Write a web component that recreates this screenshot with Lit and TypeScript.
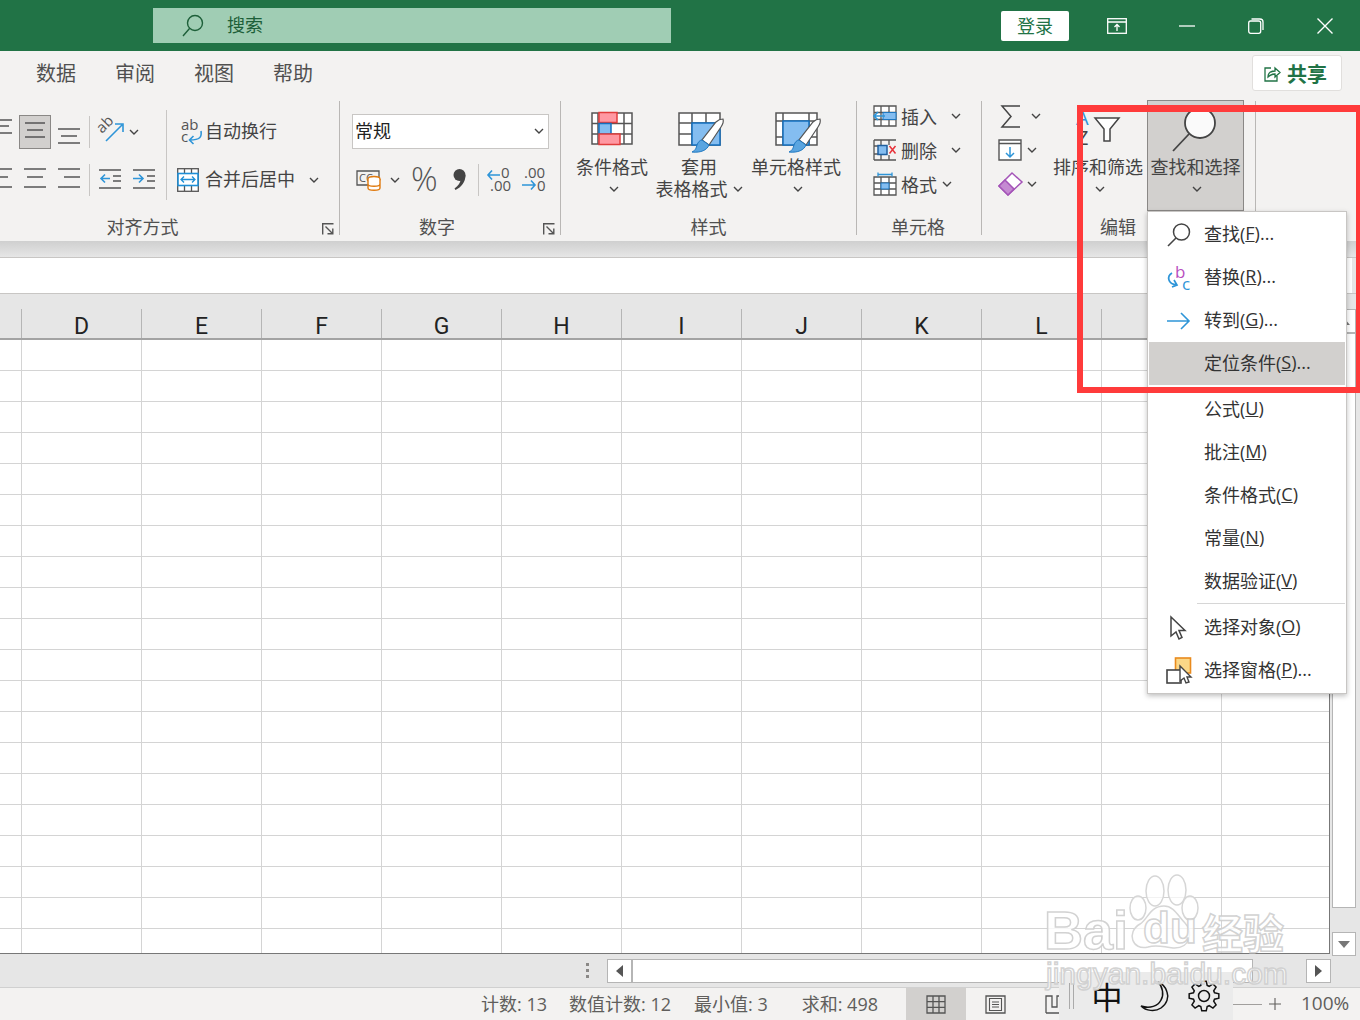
import { LitElement, html, css, svg } from "lit";
import { customElement } from "lit/decorators.js";

const chev = html`<svg class="chev" width="10" height="7" viewBox="0 0 10 7"><path d="M1 1l4 4 4-4" fill="none" stroke="#444" stroke-width="1.4"/></svg>`;
const lines = (w: number, ys: number[], xs: [number, number][]) => html`<svg width="${w}" height="34" viewBox="0 0 ${w} 34">${ys.map((y, i) => svg`<path d="M${xs[i][0]} ${y}H${xs[i][1]}" stroke="#555" stroke-width="1.5"/>`)}</svg>`;
const launcher = html`<svg class="launch" width="12" height="12" viewBox="0 0 12 12"><path d="M.7 11.5V.7h10.8" fill="none" stroke="#555" stroke-width="1.4"/><path d="M3.5 3.5l7 7M5.5 10.8h5.3V5.5" fill="none" stroke="#555" stroke-width="1.4"/></svg>`;
const brush = (x: number, y: number) => svg`<g transform="translate(${x} ${y})">
  <path d="M34 0c1 3 0 5-2 8L20 26l-7-5L27 3c2-2 5-3 7-3z" fill="#fff" stroke="#555" stroke-width="1.2"/>
  <path d="M13 21l7 5c-2 5-8 8-17 7 4-2 4-4 5-7 1-3 3-5 5-5z" fill="#5aa5e0" stroke="#1f78c1" stroke-width="1"/></g>`;

const items1 = [
  { t: "查找", k: "F", d: "...", i: "find" },
  { t: "替换", k: "R", d: "...", i: "replace" },
  { t: "转到", k: "G", d: "...", i: "goto" },
  { t: "定位条件", k: "S", d: "...", i: "", on: true },
];
const items2 = [
  { t: "公式", k: "U", d: "" }, { t: "批注", k: "M", d: "" }, { t: "条件格式", k: "C", d: "" },
  { t: "常量", k: "N", d: "" }, { t: "数据验证", k: "V", d: "" },
];

const menuIcons: Record<string, any> = {
  find: html`<svg width="26" height="26" viewBox="0 0 26 26"><circle cx="15.500" cy="10" r="8" fill="none" stroke="#444" stroke-width="1.500"/><path d="M10 16L2 24" stroke="#444" stroke-width="1.600"/></svg>`,
  replace: html`<svg width="26" height="28" viewBox="0 0 26 28"><text x="9" y="14" font-size="17" fill="#b84fc0" font-family="Open Sans">b</text><text x="16" y="26" font-size="17" fill="#2e95d8" font-family="Open Sans">c</text><path d="M6 9c-5 3-5 11 5 12M8 16l3 5-5 2" fill="none" stroke="#2e95d8" stroke-width="1.700"/></svg>`,
  goto: html`<svg width="26" height="22" viewBox="0 0 26 22"><path d="M1 11h22M15 3l8 8-8 8" fill="none" stroke="#2e95d8" stroke-width="1.600"/></svg>`,
  obj: html`<svg width="26" height="26" viewBox="0 0 26 26"><path d="M5 2v19l5-4 3 7 3-1.500-3-7h6z" fill="#fff" stroke="#444" stroke-width="1.500"/></svg>`,
  pane: html`<svg width="26" height="28" viewBox="0 0 26 28"><rect x="9.500" y="1" width="15" height="15" fill="#fbd787" stroke="#e98a1d" stroke-width="1.600"/><rect x="1" y="13" width="14" height="13" fill="#fff" stroke="#444" stroke-width="1.600"/><path d="M14 9v15l4-3 2 5 3-1-2-5h4z" fill="#fff" stroke="#444" stroke-width="1.400"/></svg>`,
};

function gearPath(cx: number, cy: number, ro: number, ri: number, n: number) {
  const p: string[] = [];
  for (let i = 0; i < n; i++) {
    const a = (i / n) * Math.PI * 2;
    const w = Math.PI / n;
    const pts: [number, number][] = [[ri, a - w * 0.75], [ro, a - w * 0.38], [ro, a + w * 0.38], [ri, a + w * 0.75]];
    for (const [r, t] of pts) p.push(`${(cx + r * Math.cos(t)).toFixed(2)} ${(cy + r * Math.sin(t)).toFixed(2)}`);
  }
  return "M" + p.join("L") + "Z";
}

@customElement("app-root")
export class AppRoot extends LitElement {
  static styles = css`
    :host { display: block; width: 1360px; height: 1020px; position: relative; overflow: hidden; background: #f3f2f1;
      font-family: "Open Sans", "Noto Sans CJK SC", sans-serif; color: #444; font-size: 18px; }
    svg { display: block; flex: none; overflow: visible; }
    .title { height: 51px; background: #217346; display: flex; align-items: center; color: #fff; }
    .search { margin-left: 153px; width: 518px; height: 35px; background: #a0cdb4; display: flex; align-items: center; color: #1d5f39; }
    .search svg { margin-left: 28px; }
    .search span { margin-left: 22px; line-height: 35px; }
    .login { margin-left: 330px; width: 68px; height: 30px; box-sizing: border-box; padding-bottom: 2px; background: #fff; border-radius: 2px; color: #217346; display: flex; align-items: center; justify-content: center; }
    .win1 { margin-left: 38px; } .win2 { margin-left: 52px; } .win3 { margin-left: 53px; } .win4 { margin-left: 53px; }

    .tabs { height: 46px; box-sizing: border-box; padding: 0 0 4px 36px; display: flex; align-items: center; font-size: 20px; gap: 39px; color: #505050; position: relative; }
    .share { margin-left: auto; margin-right: 18px; width: 90px; height: 36px; box-sizing: border-box; background: #fff; border: 1px solid #e1dfdd; border-radius: 3px; display: flex; align-items: center; padding-left: 11px; gap: 6px; color: #217346; font-weight: 700; font-size: 20px; margin-top: 2px; }

    .ribbon { height: 144px; display: flex; }
    .group { display: flex; flex-direction: column; position: relative; flex: none; padding-top: 4px; box-sizing: border-box; }
    .body { height: 115px; display: flex; flex: none; }
    .glabel { height: 24px; line-height: 24px; margin-top: -1px; text-align: center; color: #505050; white-space: nowrap; }
    .launch { position: absolute; right: 5px; bottom: 6px; }
    .gsep { width: 1px; height: 134px; margin-top: 4px; background: #b9b7b5; flex: none; }
    .sep { width: 1px; height: 32px; background: #c8c6c4; flex: none; }
    .col { display: flex; flex-direction: column; }
    .rows2 { padding-top: 14px; gap: 14px; }
    .row { display: flex; align-items: center; height: 34px; white-space: nowrap; }
    .tx { margin-bottom: 4px; }
    .seltile { width: 30px; height: 32px; border: 1px solid #8a8886; background: #d2d0ce; margin-left: 7px; display: flex; justify-content: center; align-items: center; }
    .vline { width: 1px; height: 90px; margin-top: 9px; background: #c8c6c4; flex: none; }
    .select { width: 197px; height: 35px; box-sizing: border-box; background: #fff; border: 1px solid #c8c6c4; margin-top: 13px; display: flex; align-items: center; padding-left: 2px; color: #222; }
    .select .chev { margin-left: auto; margin-right: 4px; }
    .pct { font-size: 33px; line-height: 34px; width: 26px; color: #555; font-weight: 300; margin: 0 0 3px -2px; padding-right: 2px; }
    .big { display: flex; flex-direction: column; align-items: center; flex: none; height: 115px; box-sizing: border-box; padding-top: 10px; white-space: nowrap; }
    .big .ic { height: 36px; flex: none; }
    .big .t { height: 22px; line-height: 22px; display: flex; align-items: center; gap: 5px; }
    .big .t:first-of-type { margin-top: 9px; }
    .big .t.cv { padding-left: 4px; }
    .cellrow { height: 34px; display: flex; align-items: center; white-space: nowrap; }
    .cells { padding: 0 0 0 16px; }
    .up2 { margin-top: -2px; }
    .shift2 { margin-left: 4px; }
    .find { width: 97px; height: 111px; box-sizing: border-box; border: 1px solid #8a8886; background: #d2d0ce; margin-top: -1px; margin-left: 4px; padding-top: 4px; }
    .find .ic { height: 42px; }

    .band { height: 16px; background: linear-gradient(#cfcfcf, #e6e6e6); }
    .fbar { height: 37px; box-sizing: border-box; background: #e6e6e6; border-top: 1px solid #c8c6c4; border-bottom: 1px solid #c8c6c4; }
    .fbar div { width: 1352px; height: 100%; background: #fff; }
    .main { height: 660px; display: flex; }
    .sheet { width: 1330px; display: flex; flex-direction: column; flex: none; }
    .chead { height: 46px; box-sizing: border-box; background: #e6e6e6; border-bottom: 2px solid #a3a3a3; display: flex; padding-left: 21px; padding-top: 15px; flex: none; }
    .chead div { width: 120px; flex: none; box-sizing: border-box; border-left: 1px solid #b5b5b5; text-align: center; font-family: Roboto, sans-serif; font-size: 23px; line-height: 35px; color: #222; }
    .chead div:last-child { width: 109px; }
    .cells-grid { flex: 1; background-color: #fff; border-right: 1px solid #777; border-bottom: 1px solid #777;
      background-image: linear-gradient(#d4d4d4 1px, transparent 1px), linear-gradient(90deg, #d4d4d4 1px, transparent 1px);
      background-size: 120px 31px; background-position: 21px 30px; }
    .vscroll { width: 30px; background: #e6e6e6; display: flex; flex-direction: column; padding: 15px 0 0 2px; box-sizing: border-box; flex: none; }
    .vbtn { width: 24px; height: 24px; box-sizing: border-box; background: #fff; border: 1px solid #b5b5b5; display: flex; align-items: center; justify-content: center; flex: none; }
    .vthumb { width: 24px; height: 575px; box-sizing: border-box; background: #fff; border: 1px solid #b5b5b5; flex: none; }
    .vscroll .last { margin-top: 24px; }
    .hscroll { height: 34px; box-sizing: border-box; background: #e6e6e6; border-bottom: 1px solid #d0d0d0; display: flex; align-items: center; padding-left: 586px; }
    .dots { display: flex; flex-direction: column; gap: 3px; margin-right: 18px; }
    .dots i { width: 3px; height: 3px; background: #8a8886; display: block; }
    .hbtn { width: 25px; height: 24px; box-sizing: border-box; background: #fff; border: 1px solid #b5b5b5; display: flex; align-items: center; justify-content: center; flex: none; }
    .hthumb { width: 621px; height: 24px; box-sizing: border-box; background: #fff; border: 1px solid #b5b5b5; flex: none; }
    .status { height: 32px; display: flex; align-items: center; white-space: nowrap; color: #605e5c; font-size: 18px; position: relative; }
    .status > span { flex: none; }
    .st { margin-bottom: 2px; }
    .sbtn { width: 60px; height: 32px; display: flex; align-items: center; justify-content: center; flex: none; }
    .sbtn.on { background: #d2d0ce; }

    .menu { position: absolute; left: 1147px; top: 211px; width: 200px; height: 483px; box-sizing: border-box; background: #fff; border: 1px solid #c8c6c4; box-shadow: 0 2px 5px rgba(0,0,0,.25); padding: 1px; z-index: 2; color: #333; }
    .mi { height: 43px; box-sizing: border-box; display: flex; align-items: center; white-space: nowrap; position: relative; padding: 0 0 4px 55px; }
    .mi.on { background: #d2d0ce; }
    .mi svg { position: absolute; left: 17px; top: 50%; transform: translateY(-50%); }
    .mgap { height: 3px; }
    .msep { height: 1px; background: #d6d6d6; margin: 0 0 2px 48px; }
    .red { position: absolute; left: 1077px; top: 105px; width: 283px; height: 288px; box-sizing: border-box; border: solid #ff3b3b; border-width: 7px 4px 6px 6px; z-index: 3; }
    .ime { position: absolute; left: 1059px; top: 972px; width: 174px; height: 48px; background: #ebebeb; display: flex; align-items: center; z-index: 4; color: #111; }
    .ime .zh { font-size: 31px; line-height: 48px; margin-left: 15px; width: 36px; text-align: center; font-family: "Noto Sans CJK SC", sans-serif; }
    .wm { position: absolute; left: 1040px; top: 870px; width: 270px; height: 125px; z-index: 5; pointer-events: none; }
    .wm span { position: absolute; white-space: nowrap; color: rgba(255,255,255,.8); -webkit-text-stroke: 1.5px rgba(205,205,205,.9); font-family: "Liberation Sans", "Noto Sans CJK SC", sans-serif; font-weight: 700; }
    .wm .bai { left: 4px; top: 30px; font-size: 54px; line-height: 60px; }
    .wm .du { left: 103px; top: 33px; font-size: 44px; line-height: 50px; }
    .wm .jy { left: 162px; top: 36px; font-size: 41px; line-height: 50px; font-family: "Noto Sans CJK SC", sans-serif; }
    .wm .url { left: 6px; top: 86px; font-size: 30px; line-height: 36px; font-weight: 400; }
    .wm svg { position: absolute; left: 90px; top: 0; }
  `;

  private menuItem(t: string, k: string, d: string, icon: any, on = false) {
    return html`<div class="mi ${on ? "on" : ""}">${icon || ""}${t}(<u>${k}</u>)${d}</div>`;
  }

  render() {
    const cols = ["D", "E", "F", "G", "H", "I", "J", "K", "L", "M", "N"];
    return html`
      <div class="title">
        <div class="search">
          <svg width="24" height="26" viewBox="0 0 24 26"><circle cx="14" cy="10" r="7.500" fill="none" stroke="#1d5f39" stroke-width="1.400"/><path d="M8.500 15.500L2 23" stroke="#1d5f39" stroke-width="1.400"/></svg>
          <span>搜索</span>
        </div>
        <div class="login">登录</div>
        <svg class="win1" width="20" height="16" viewBox="0 0 20 16"><rect x=".7" y=".7" width="18.600" height="14.600" fill="none" stroke="#fff" stroke-width="1.300"/><path d="M1 4h18M10 13V6.500M7.500 9L10 6.500 12.500 9" fill="none" stroke="#fff" stroke-width="1.300"/></svg>
        <svg class="win2" width="16" height="2" viewBox="0 0 16 2"><path d="M0 1h16" stroke="#fff" stroke-width="1.300"/></svg>
        <svg class="win3" width="16" height="16" viewBox="0 0 16 16"><rect x=".7" y="3" width="12" height="12.300" rx="2" fill="none" stroke="#fff" stroke-width="1.300"/><path d="M3.500 1h8.500a3 3 0 0 1 3 3v8" fill="none" stroke="#fff" stroke-width="1.300"/></svg>
        <svg class="win4" width="16" height="16" viewBox="0 0 16 16"><path d="M.5.5l15 15M15.500.5l-15 15" stroke="#fff" stroke-width="1.400"/></svg>
      </div>

      <div class="tabs">
        <span>数据</span><span>审阅</span><span>视图</span><span>帮助</span>
        <div class="share">
          <svg width="17" height="17" viewBox="0 0 17 17"><path d="M7 3H1v13h12v-5" fill="none" stroke="#217346" stroke-width="1.300"/><path d="M4 12c0-4 3-6 7-6V3l5 4.500L11 12V9c-3 0-5 1-7 3z" fill="none" stroke="#217346" stroke-width="1.300"/></svg>
          <span>共享</span>
        </div>
      </div>

      <div class="ribbon">
        <div class="group" style="width:339px">
          <div class="body">
            <div class="col rows2" style="width:166px">
              <div class="row">
                ${lines(12, [5, 11, 18], [[0, 12], [0, 9], [0, 12]])}
                <div class="seltile">${lines(22, [8, 15, 22], [[1, 21], [3, 19], [1, 21]])}</div>
                <div style="margin-left:7px">${lines(22, [14, 21, 28], [[0, 22], [3, 19], [0, 22]])}</div>
                <div class="sep" style="margin-left:9px"></div>
                <svg style="margin-left:7px" width="26" height="26" viewBox="0 0 26 26">
                  <text x="5" y="15" font-size="15" fill="#555" font-family="Open Sans" transform="rotate(-45 5 15)">ab</text>
                  <path d="M9 22L25 6M18 5h8v8" fill="none" stroke="#2e95d8" stroke-width="1.600"/>
                </svg>
                <span style="margin-left:6px">${chev}</span>
              </div>
              <div class="row">
                ${lines(12, [6, 14, 24], [[0, 12], [0, 8], [0, 12]])}
                <div style="margin-left:12px">${lines(22, [6, 14, 24], [[0, 22], [3, 19], [0, 22]])}</div>
                <div style="margin-left:12px">${lines(22, [6, 14, 24], [[0, 22], [6, 22], [0, 22]])}</div>
                <div class="sep" style="margin-left:9px"></div>
                <svg style="margin-left:9px" width="22" height="34" viewBox="0 0 22 34"><path d="M0 7h22M14 13h8M14 18h8M0 25h22" stroke="#555" stroke-width="1.500"/><path d="M11 15.500H2M6 11.500l-4 4 4 4" fill="none" stroke="#2e95d8" stroke-width="1.600"/></svg>
                <svg style="margin-left:12px" width="22" height="34" viewBox="0 0 22 34"><path d="M0 7h22M14 13h8M14 18h8M0 25h22" stroke="#555" stroke-width="1.500"/><path d="M0 15.500h10M6 11.500l4 4-4 4" fill="none" stroke="#2e95d8" stroke-width="1.600"/></svg>
              </div>
            </div>
            <div class="vline"></div>
            <div class="col rows2">
              <div class="row" style="padding-left:13px;gap:2px">
                <svg width="23" height="26" viewBox="0 0 23 26">
                  <text x="1" y="11" font-size="15" fill="#555" font-family="Open Sans">ab</text>
                  <text x="1" y="23" font-size="15" fill="#555" font-family="Open Sans">c</text>
                  <path d="M21 12c1 6-1 9-11 9M13.500 17l-4 4 4 4" fill="none" stroke="#2e95d8" stroke-width="1.600"/>
                </svg>
                <span class="tx">自动换行</span>
              </div>
              <div class="row" style="padding-left:10px;gap:6px">
                <svg width="22" height="24" viewBox="0 0 22 24"><rect x=".7" y=".7" width="20.600" height="22.600" fill="#fff" stroke="#555" stroke-width="1.300"/><path d="M7.500 1v22M14.500 1v22" stroke="#555" stroke-width="1.300"/><rect x="1" y="5.500" width="20" height="12" fill="#fff" stroke="#1f8fd6" stroke-width="1.600"/><path d="M4 11.500h14M7 8.500l-3 3 3 3M15 8.500l3 3-3 3" fill="none" stroke="#1f8fd6" stroke-width="1.300"/></svg>
                <span class="tx">合并后居中</span>
                <span style="margin-left:8px">${chev}</span>
              </div>
            </div>
          </div>
          <div class="glabel" style="padding-right:54px">对齐方式</div>
          ${launcher}
        </div>
        <div class="gsep"></div>

        <div class="group" style="width:220px">
          <div class="body" style="padding-left:12px">
            <div class="col">
              <div class="select"><span class="tx">常规</span> ${chev}</div>
              <div class="row" style="margin-top:14px;width:197px">
                <svg style="margin-left:4px" width="25" height="24" viewBox="0 0 25 24"><path d="M1 3h22v14H1z" fill="none" stroke="#555" stroke-width="1.300"/><text x="3" y="14" font-size="11" fill="#555" font-family="Open Sans">CC</text><ellipse cx="18" cy="11" rx="6" ry="2.500" fill="#fff" stroke="#e07b10" stroke-width="1.400"/><path d="M12 11v9c0 3 12 3 12 0v-9M12 16c0 3 12 3 12 0" fill="#fff" stroke="#e07b10" stroke-width="1.400"/></svg>
                <span style="margin-left:9px">${chev}</span>
                <span class="pct" style="margin-left:11px">%</span>
                <svg style="margin-left:13px" width="14" height="26" viewBox="0 0 14 26"><circle cx="7.500" cy="8" r="6" fill="#444"/><path d="M13.500 8c0 7-4 12-10 15l-1-1.500c4-3 6-6 6-9z" fill="#444"/></svg>
                <div class="sep" style="margin-left:12px"></div>
                <svg style="margin-left:8px" width="25" height="26" viewBox="0 0 25 26"><text x="14" y="11" font-size="15" fill="#555" font-family="Open Sans">0</text><text x="3" y="24" font-size="15" fill="#555" font-family="Open Sans">.00</text><path d="M13 8H1M5 3.500L1 8l4 4.500" fill="none" stroke="#2e95d8" stroke-width="1.600"/></svg>
                <svg style="margin-left:9px" width="25" height="26" viewBox="0 0 25 26"><text x="3" y="11" font-size="15" fill="#555" font-family="Open Sans">.00</text><text x="16" y="24" font-size="15" fill="#555" font-family="Open Sans">0</text><path d="M1 18h13M10 13.500l4 4.500-4 4.500" fill="none" stroke="#2e95d8" stroke-width="1.600"/></svg>
              </div>
            </div>
          </div>
          <div class="glabel" style="padding-right:26px">数字</div>
          ${launcher}
        </div>
        <div class="gsep"></div>

        <div class="group" style="width:295px">
          <div class="body" style="padding-left:14px">
            <div class="big" style="width:74px">
              <svg class="ic" width="44" height="36" viewBox="0 0 44 36">
                <path d="M2 2h40v31H2zM2 12.500h40M2 23h40M8 2v31M34 2v31" fill="#fff" stroke="#555" stroke-width="1.500"/>
                <rect x="9" y="1.500" width="18" height="10" fill="#ff98a2" stroke="#e03c3c" stroke-width="1.500"/>
                <rect x="9" y="12.500" width="12" height="10.500" fill="#84bdf0" stroke="#1370c0" stroke-width="1.500"/>
                <rect x="9" y="23" width="21" height="10.500" fill="#ff98a2" stroke="#e03c3c" stroke-width="1.500"/>
              </svg>
              <div class="t">条件格式</div>
              <div class="t cv">${chev}</div>
            </div>
            <div class="big" style="width:90px;margin-left:5px">
              <svg class="ic shift2" width="48" height="36" viewBox="0 0 48 36">
                <path d="M2 2h41v32H2zM2 12h41M2 23h41M15 2v32M29 2v32" fill="#fff" stroke="#555" stroke-width="1.500"/>
                <path d="M15 12h28v22H15z" fill="#84bdf0" stroke="#1370c0" stroke-width="1.500"/>
                ${brush(12, 8)}
              </svg>
              <div class="t">套用</div>
              <div class="t">表格格式 ${chev}</div>
            </div>
            <div class="big" style="width:92px;margin-left:6px">
              <svg class="ic shift2" width="48" height="36" viewBox="0 0 48 36">
                <path d="M2 2h41v32H2zM2 10h41M9 2v32M35 2v32M2 26h7M35 26h8" fill="#fff" stroke="#555" stroke-width="1.500"/>
                <path d="M9 10h26v24H9z" fill="#84bdf0" stroke="#1370c0" stroke-width="1.500"/>
                ${brush(12, 8)}
              </svg>
              <div class="t">单元格样式</div>
              <div class="t cv">${chev}</div>
            </div>
          </div>
          <div class="glabel">样式</div>
        </div>
        <div class="gsep"></div>

        <div class="group" style="width:124px">
          <div class="body cells">
            <div class="col up2">
              <div class="cellrow" style="gap:4px">
                <svg width="24" height="22" viewBox="0 0 24 22"><path d="M1 1h22v20H1zM1 7.500h22M1 14.500h22M8 1v20M16 1v20" fill="#fff" stroke="#555" stroke-width="1.300"/><rect x="10" y="7.500" width="13" height="7" fill="#84bdf0" stroke="#1f78c1"/><path d="M12 11H1M5 7l-4 4 4 4" fill="none" stroke="#2e95d8" stroke-width="1.700"/></svg>
                <span>插入</span><span style="margin-left:10px">${chev}</span>
              </div>
              <div class="cellrow" style="gap:4px">
                <svg width="24" height="22" viewBox="0 0 24 22"><path d="M1 1h22M1 21h22M1 1v20M8 1v5M16 1v5M8 16v5M16 16v5M1 7h7M1 15h7" fill="none" stroke="#555" stroke-width="1.300"/><rect x="5" y="6.500" width="9" height="9" fill="#84bdf0" stroke="#1f5f9f" stroke-width="1.500"/><path d="M16.500 7l6 7.500M22.500 7l-6 7.500" stroke="#e8333a" stroke-width="1.500"/></svg>
                <span>删除</span><span style="margin-left:10px">${chev}</span>
              </div>
              <div class="cellrow" style="gap:4px">
                <svg width="24" height="24" viewBox="0 0 24 24"><path d="M1 5h22v18H1zM1 11h22M1 17h22M8 5v18M16 5v18" fill="#fff" stroke="#555" stroke-width="1.300"/><rect x="8" y="11" width="8" height="6" fill="#84bdf0" stroke="#1f78c1"/><path d="M5 2.500h14M5 .5v4M19 .5v4" stroke="#2e95d8" stroke-width="1.300"/></svg>
                <span>格式</span><span style="margin-left:1px">${chev}</span>
              </div>
            </div>
          </div>
          <div class="glabel" style="padding-right:2px">单元格</div>
        </div>
        <div class="gsep"></div>

        <div class="group" style="width:273px">
          <div class="body">
            <div class="col up2" style="width:71px;padding-left:16px;box-sizing:border-box">
              <div class="cellrow" style="gap:11px">
                <svg style="margin-left:2px" width="20" height="23" viewBox="0 0 20 23"><path d="M20 1H2l9 10.500L2 22h18" fill="none" stroke="#444" stroke-width="1.500"/></svg>
                ${chev}
              </div>
              <div class="cellrow" style="gap:5px">
                <svg width="24" height="22" viewBox="0 0 24 22"><path d="M1 1h22v20H1zM1 4.500h22" fill="#fff" stroke="#555" stroke-width="1.400"/><path d="M12 8v10M8 14l4 4 4-4" fill="none" stroke="#2e95d8" stroke-width="1.500"/></svg>
                ${chev}
              </div>
              <div class="cellrow" style="gap:5px">
                <svg width="24" height="24" viewBox="0 0 24 24"><path d="M14 1l10 9-14 13-9-9z" fill="#fff" stroke="#a454b8" stroke-width="1.500"/><path d="M7 8l9 9-6 6-9-9z" fill="#c58ad2" stroke="#a454b8" stroke-width="1.500"/></svg>
                ${chev}
              </div>
            </div>
            <div class="big" style="width:90px">
              <svg class="ic" width="40" height="36" viewBox="0 0 40 36">
                <text x="-2" y="14" font-size="20" fill="#2e95d8" font-family="Open Sans">A</text>
                <text x="-1" y="34" font-size="20" fill="#444" font-family="Open Sans">Z</text>
                <path d="M17 7h24l-9 11v12h-6V18z" fill="#fff" stroke="#444" stroke-width="1.500"/>
              </svg>
              <div class="t">排序和筛选</div>
              <div class="t cv">${chev}</div>
            </div>
            <div class="big find">
              <svg class="ic" width="52" height="42" viewBox="0 0 52 42">
                <circle cx="30" cy="18" r="15" fill="#fafafa" stroke="#444" stroke-width="1.800"/>
                <path d="M19 29L3 46" stroke="#444" stroke-width="1.800"/>
              </svg>
              <div class="t">查找和选择</div>
              <div class="t cv" style="padding-left:2px">${chev}</div>
            </div>
          </div>
          <div class="glabel" style="padding-right:1px;width:272px">编辑</div>
        </div>
        <div class="gsep"></div>
      </div>

      <div class="band"></div>
      <div class="fbar"><div></div></div>

      <div class="main">
        <div class="sheet">
          <div class="chead">${cols.map((c) => html`<div>${c}</div>`)}</div>
          <div class="cells-grid"></div>
        </div>
        <div class="vscroll">
          <div class="vbtn"><svg width="12" height="7" viewBox="0 0 12 7"><path d="M6 0l6 7H0z" fill="#777"/></svg></div>
          <div class="vthumb"></div>
          <div class="vbtn last"><svg width="12" height="7" viewBox="0 0 12 7"><path d="M0 0h12L6 7z" fill="#777"/></svg></div>
        </div>
      </div>

      <div class="hscroll">
        <div class="dots"><i></i><i></i><i></i></div>
        <div class="hbtn"><svg width="7" height="12" viewBox="0 0 7 12"><path d="M7 0v12L0 6z" fill="#555"/></svg></div>
        <div class="hthumb"></div>
        <div class="hbtn" style="margin-left:53px"><svg width="7" height="12" viewBox="0 0 7 12"><path d="M0 0v12l7-6z" fill="#555"/></svg></div>
      </div>

      <div class="status">
        <span class="st" style="margin-left:481px">计数: 13</span>
        <span class="st" style="margin-left:22px">数值计数: 12</span>
        <span class="st" style="margin-left:23px">最小值: 3</span>
        <span class="st" style="margin-left:34px">求和: 498</span>
        <span style="margin-left:28px" class="sbtn on"><svg width="20" height="19" viewBox="0 0 20 19"><path d="M1 1h18v17H1zM1 6.700h18M1 12.300h18M7 1v17M13 1v17" fill="none" stroke="#555" stroke-width="1.300"/></svg></span>
        <span class="sbtn"><svg width="21" height="19" viewBox="0 0 21 19"><path d="M1 1h19v17H1z" fill="none" stroke="#555" stroke-width="1.300"/><path d="M4.500 3.500h12v12h-12zM7 7h7M7 9.500h7M7 12h7" fill="none" stroke="#555" stroke-width="1.100"/></svg></span>
        <span class="sbtn" style="justify-content:flex-start;padding-left:19px;box-sizing:border-box"><svg width="16" height="19" viewBox="0 0 16 19"><path d="M1 18V1h6v11h5V1h4M1 18h15" fill="none" stroke="#555" stroke-width="1.300"/></svg></span>
        <span style="margin-left:147px;width:29px;height:1px;background:#a19f9d"></span>
        <svg style="margin-left:7px" width="12" height="12" viewBox="0 0 12 12"><path d="M0 6h12M6 0v12" stroke="#605e5c" stroke-width="1.100"/></svg>
        <span class="st" style="margin-left:20px;font-size:19px">100%</span>
      </div>

      <div class="menu">
        ${items1.map((m) => this.menuItem(m.t, m.k, m.d, m.i ? menuIcons[m.i] : null, !!m.on))}
        <div class="mgap"></div>
        ${items2.map((m) => this.menuItem(m.t, m.k, m.d, null))}
        <div class="msep"></div>
        ${this.menuItem("选择对象", "O", "", menuIcons.obj)}
        ${this.menuItem("选择窗格", "P", "...", menuIcons.pane)}
      </div>

      <div class="red"></div>

      <div class="ime">
        <svg style="margin-left:10px" width="5" height="26" viewBox="0 0 5 26"><path d="M.5 0v26M4.500 0v26" stroke="#aaa" stroke-width="1"/></svg>
        <span class="zh">中</span>
        <svg style="margin-left:15px" width="30" height="30" viewBox="0 0 30 30"><path d="M18 1c5 5 6 13 3 18-3 6-11 9-20 6 5 5 14 6 20 2 6-4 8-11 6-16-1-4-4-8-9-10z" fill="none" stroke="#111" stroke-width="1.500"/></svg>
        <svg style="margin-left:18px" width="32" height="32" viewBox="0 0 32 32"><path d="${gearPath(16, 16, 15, 11, 8)}" fill="none" stroke="#111" stroke-width="1.500"/><circle cx="16" cy="16" r="5.500" fill="none" stroke="#111" stroke-width="1.500"/></svg>
      </div>

      <div class="wm">
        <svg width="115" height="82" viewBox="0 0 115 82">
          <g fill="rgba(255,255,255,.7)" stroke="#d6d6d6" stroke-width="1.500">
            <ellipse cx="25" cy="21" rx="9" ry="15"/><ellipse cx="47" cy="20" rx="9" ry="15"/>
            <ellipse cx="8" cy="38" rx="8" ry="12"/><ellipse cx="60" cy="38" rx="8" ry="12"/>
            <path d="M34 36c10 0 14 10 21 17 8 8 6 26-12 25-10-1-16-4-25-1C2 81-4 62 10 54c8-5 10-18 24-18z"/>
          </g>
        </svg>
        <span class="bai">Bai</span><span class="du">du</span><span class="jy">经验</span>
        <span class="url">jingyan.baidu.com</span>
      </div>
    `;
  }
}
